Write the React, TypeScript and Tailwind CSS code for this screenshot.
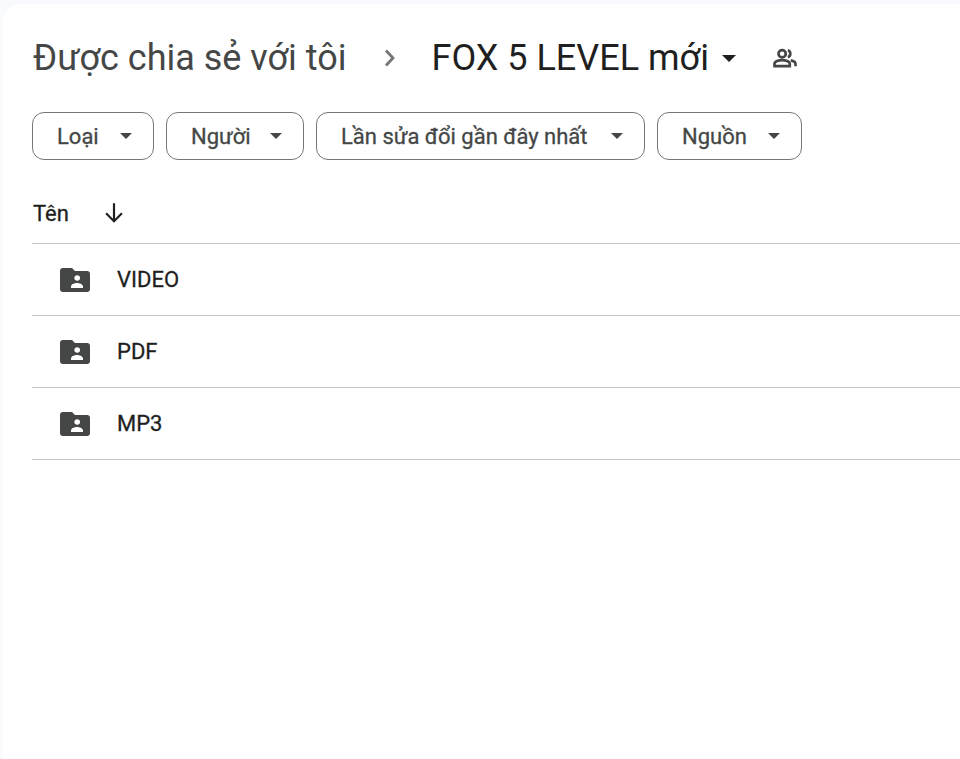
const sans = "font-['Roboto','Noto_Sans',sans-serif]";

function Caret({ className }: { className: string }) {
  return (
    <svg viewBox="0 0 10 5" className={className} fill="currentColor">
      <path d="M0 0l5 5 5-5z" />
    </svg>
  );
}

function Chip({ label, width }: { label: string; width: string }) {
  return (
    <button className={`flex h-12 ${width} items-center justify-between rounded-xl border border-[#747775] pl-[24px] pr-[21px] text-[22px] font-normal text-[#444746] [-webkit-text-stroke:0.3px_#444746]`}>
      <span>{label}</span>
      <Caret className="h-[6px] w-[12px]" />
    </button>
  );
}

function SharedFolder() {
  return (
    <svg viewBox="0 0 30 24" className="h-6 w-[30px] text-[#444746]">
      <path
        fill="currentColor"
        fillRule="evenodd"
        d="M3 0h9l3 3h12a3 3 0 0 1 3 3v15a3 3 0 0 1-3 3H3a3 3 0 0 1-3-3V3a3 3 0 0 1 3-3zM20 10a2.8 2.8 0 1 0-5.6 0 2.8 2.8 0 0 0 5.600 0zM11 18.500V20h12v-1.500c0-2.400-4-3.500-6-3.500s-6 1.100-6 3.500z"
      />
    </svg>
  );
}

function Row({ name }: { name: string }) {
  return (
    <div className="flex h-[72px] items-center border-b border-[#c7c7c7] pl-7">
      <SharedFolder />
      <span className="ml-[27px] text-[22px] font-normal text-[#1f1f1f] [-webkit-text-stroke:0.3px_#1f1f1f]">{name}</span>
    </div>
  );
}

export default function App() {
  return (
    <div className={`h-[759px] w-[960px] overflow-hidden bg-[#f8fafd] pl-[2px] pt-[4px] ${sans}`}>
      <div className="h-full rounded-tl-[20px] bg-white pl-[30px]">
        <div className="flex h-[108px] items-center">
          <span className="ml-[1px] text-[36px] text-[#444746]">Được chia sẻ với tôi</span>
          <svg viewBox="0 0 12 18" className="ml-[37px] h-[18px] w-3 text-[#747775]" fill="none" stroke="currentColor" strokeWidth="2.800">
            <path d="M2 1.500L9 9l-7 7.500" />
          </svg>
          <span className="ml-[36px] text-[36px] text-[#1f1f1f]">FOX 5 LEVEL mới</span>
          <Caret className="ml-[13px] h-[7px] w-[14px] text-[#1f1f1f]" />
          <svg viewBox="0 0 26 22" className="ml-[36px] h-[21px] w-[26px] text-[#444746]" fill="none" stroke="currentColor" strokeWidth="2.800">
            <circle cx="10" cy="6" r="3.800" />
            <path d="M2 19v-2.500c0-2.600 4.500-3.800 8-3.800s8 1.200 8 3.800V19z" />
            <path d="M16 2.400a3.800 3.800 0 0 1 0 7.200M19 13c2.500.5 5 1.600 5 3.500V19" />
          </svg>
        </div>
        <div className="flex gap-3">
          <Chip label="Loại" width="w-[122px]" />
          <Chip label="Người" width="w-[138px]" />
          <Chip label="Lần sửa đổi gần đây nhất" width="w-[329px]" />
          <Chip label="Nguồn" width="w-[145px]" />
        </div>
        <div className="mt-[24px] flex h-[60px] items-center border-b border-[#c7c7c7]">
          <span className="ml-[1px] text-[22px] text-[#1f1f1f] [-webkit-text-stroke:0.3px_#1f1f1f]">Tên</span>
          <svg viewBox="0 0 24 24" className="mb-[2px] ml-[32px] h-[26px] w-[26px] text-[#1f1f1f]" fill="currentColor">
            <path d="M11 3h2v14.200l5.600-5.600L20 13l-8 8-8-8 1.400-1.400L11 17.200z" />
          </svg>
        </div>
        <Row name="VIDEO" />
        <Row name="PDF" />
        <Row name="MP3" />
      </div>
    </div>
  );
}
